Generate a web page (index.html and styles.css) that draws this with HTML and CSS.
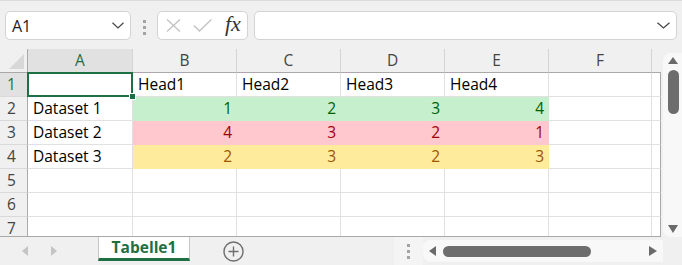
FILE: index.html
```html
<!DOCTYPE html>
<html lang="de">
<head>
  <meta charset="UTF-8">
  <title>Tabelle1</title>
  <link rel="stylesheet" href="styles.css">
</head>
<body>

  <!-- Formula bar -->
  <div class="toolbar">
    <div class="name-box">
      <span>A1</span>
      <svg width="12" height="7" viewBox="0 0 12 7"><path d="M0.5 0.8 L6 6 L11.5 0.8" fill="none" stroke="#444" stroke-width="1.2"/></svg>
    </div>
    <div class="grip"><i></i><i></i><i></i></div>
    <div class="fx-box">
      <svg width="15" height="13" viewBox="0 0 15 13"><path d="M1 0.5 L14 12.5 M14 0.5 L1 12.5" stroke="#c2c2c2" stroke-width="1.3"/></svg>
      <svg width="19" height="13" viewBox="0 0 19 13"><path d="M0.8 6.5 L6.5 12 L18.3 0.5" fill="none" stroke="#c2c2c2" stroke-width="1.3"/></svg>
      <span class="fx">fx</span>
    </div>
    <div class="formula">
      <svg width="13" height="7" viewBox="0 0 13 7"><path d="M0.5 0.8 L6.5 6 L12.5 0.8" fill="none" stroke="#444" stroke-width="1.2"/></svg>
    </div>
  </div>

  <!-- Sheet -->
  <div class="sheet">
    <div class="grid">
      <div class="corner"></div>
      <div class="ch sel">A</div>
      <div class="ch">B</div>
      <div class="ch">C</div>
      <div class="ch">D</div>
      <div class="ch">E</div>
      <div class="ch">F</div>
      <div class="ch last"></div>

      <div class="rh sel">1</div>
      <div class="c active"></div>
      <div class="c">Head1</div>
      <div class="c">Head2</div>
      <div class="c">Head3</div>
      <div class="c">Head4</div>
      <div class="c"></div>
      <div class="c edge"></div>

      <div class="rh">2</div>
      <div class="c">Dataset 1</div>
      <div class="c num g">1</div>
      <div class="c num g">2</div>
      <div class="c num g">3</div>
      <div class="c num g">4</div>
      <div class="c"></div>
      <div class="c edge"></div>

      <div class="rh">3</div>
      <div class="c">Dataset 2</div>
      <div class="c num r">4</div>
      <div class="c num r">3</div>
      <div class="c num r">2</div>
      <div class="c num r">1</div>
      <div class="c"></div>
      <div class="c edge"></div>

      <div class="rh">4</div>
      <div class="c">Dataset 3</div>
      <div class="c num y">2</div>
      <div class="c num y">3</div>
      <div class="c num y">2</div>
      <div class="c num y">3</div>
      <div class="c"></div>
      <div class="c edge"></div>

      <div class="rh">5</div>
      <div class="c"></div><div class="c"></div><div class="c"></div><div class="c"></div>
      <div class="c"></div><div class="c"></div><div class="c edge"></div>

      <div class="rh">6</div>
      <div class="c"></div><div class="c"></div><div class="c"></div><div class="c"></div>
      <div class="c"></div><div class="c"></div><div class="c edge"></div>

      <div class="rh">7</div>
      <div class="c"></div><div class="c"></div><div class="c"></div><div class="c"></div>
      <div class="c"></div><div class="c"></div><div class="c edge"></div>
    </div>

    <div class="vscroll">
      <span class="arrow up"></span>
      <span class="thumb-v"></span>
      <span class="arrow down"></span>
    </div>
  </div>

  <!-- Sheet tabs -->
  <div class="tabbar">
    <div class="nav">
      <span class="arrow left"></span>
      <span class="arrow right"></span>
    </div>
    <div class="tab">Tabelle1</div>
    <div class="add">
      <svg width="21" height="21" viewBox="0 0 21 21">
        <circle cx="10.5" cy="10.5" r="9.5" fill="none" stroke="#6f6f6f" stroke-width="1.4"/>
        <path d="M10.5 5.5 V15.5 M5.5 10.5 H15.5" stroke="#6f6f6f" stroke-width="1.4"/>
      </svg>
    </div>
    <div class="grip h"><i></i><i></i><i></i></div>
    <div class="hscroll">
      <span class="arrow left dark"></span>
      <span class="thumb-h"></span>
      <span class="arrow right dark"></span>
    </div>
  </div>

</body>
</html>
```

FILE: styles.css
```css
/* Global Styles */
body {
  margin: 0;
  width: 682px;
  height: 265px;
  overflow: hidden;
  background: #f0f0f0;
  font-family: "Open Sans", "Noto Sans", sans-serif;
  color: #000;
}

/* Formula bar */
.toolbar {
  height: 49px;
  box-sizing: border-box;
  border-top: 1px solid #dcdcdc;
  padding: 10px 5px 0;
  display: flex;
  align-items: flex-start;
}

.name-box,
.fx-box,
.formula {
  height: 29px;
  box-sizing: border-box;
  background: #fff;
  border: 1px solid #d3d3d3;
  border-radius: 5px;
  display: flex;
  align-items: center;
}

.name-box {
  width: 126px;
  justify-content: space-between;
  padding: 0 6px 0 6px;
  font-size: 16px;
  color: #222;
}

.grip {
  width: 26px;
  display: flex;
  flex-direction: column;
  align-items: center;
  gap: 3px;
  padding-top: 9px;
}

.grip i {
  width: 3px;
  height: 3px;
  background: #a3a3a3;
}

.fx-box {
  width: 91px;
  padding: 0 6px 0 8px;
  gap: 12px;
}

.fx {
  font-family: "Liberation Serif", serif;
  font-style: italic;
  font-size: 22px;
  color: #333;
  margin-left: 1px;
  margin-top: -3px;
}

.formula {
  flex: 1;
  margin-left: 6px;
  justify-content: flex-end;
  padding-right: 6px;
}

/* Sheet grid */
.sheet {
  display: flex;
  height: 188px;
}

.grid {
  width: 661px;
  height: 188px;
  box-sizing: border-box;
  border-bottom: 1px solid #a9a9a9;
  overflow: hidden;
  display: grid;
  grid-template-columns: 28px 105px 104px 104px 104px 104px 103px 9px;
  grid-auto-rows: 24px;
  font-size: 15.5px;
}

.grid > div {
  box-sizing: border-box;
  line-height: 23px;
  white-space: nowrap;
}

.corner {
  position: relative;
  border-right: 1px solid #a9a9a9;
  border-bottom: 1px solid #a9a9a9;
}

.corner::after {
  content: "";
  position: absolute;
  right: 3px;
  bottom: 3px;
  width: 15px;
  height: 15px;
  background: #d8d8d8;
  clip-path: polygon(100% 0, 100% 100%, 0 100%);
}

.ch {
  text-align: center;
  color: #444;
  border-right: 1px solid #d4d4d4;
  border-bottom: 1px solid #a9a9a9;
}

.ch.last {
  border-right: none;
}

.ch.sel {
  background: #e1e1e1;
  color: #1e6f44;
}

.rh {
  text-align: center;
  padding-right: 4px;
  color: #444;
  background: #f0f0f0;
  border-right: 1px solid #a9a9a9;
  border-bottom: 1px solid #d9d9d9;
}

.rh.sel {
  background: #e1e1e1;
  color: #1e6f44;
}

.c {
  background: #fff;
  padding: 0 4px 0 5px;
  border-right: 1px solid #e1e1e1;
  border-bottom: 1px solid #e1e1e1;
  overflow: visible;
}

.c.num {
  text-align: right;
}

.c.edge {
  padding: 0;
  border-right: 1px solid #a9a9a9;
}

.c.g {
  background: #c6efce;
  border-color: #c6efce;
  color: #006100;
}

.c.r {
  background: #ffc7ce;
  border-color: #ffc7ce;
  color: #9c0006;
}

.c.y {
  background: #ffeb9c;
  border-color: #ffeb9c;
  color: #9c5700;
}

/* Active cell frame */
.c.active {
  position: relative;
}

.c.active::before {
  content: "";
  position: absolute;
  left: -1px;
  top: -1px;
  right: -1px;
  bottom: -1px;
  border: 2px solid #1e6f44;
}

.c.active::after {
  content: "";
  position: absolute;
  right: -4px;
  bottom: -4px;
  width: 5px;
  height: 5px;
  background: #1e6f44;
  border: 1px solid #fff;
  z-index: 2;
}

/* Scrollbars */
.arrow {
  width: 0;
  height: 0;
  border-style: solid;
  border-color: transparent;
}

.arrow.up {
  border-width: 0 5px 7px;
  border-bottom-color: #6a6a6a;
}

.arrow.down {
  border-width: 8px 5px 0;
  border-top-color: #6a6a6a;
  margin-top: auto;
}

.arrow.left {
  border-width: 5px 6px 5px 0;
  border-right-color: #c4c4c4;
}

.arrow.right {
  border-width: 5px 0 5px 6px;
  border-left-color: #c4c4c4;
}

.arrow.left.dark {
  border-width: 5px 7px 5px 0;
  border-right-color: #6a6a6a;
}

.arrow.right.dark {
  border-width: 5px 0 5px 8px;
  border-left-color: #6a6a6a;
  margin-left: auto;
}

.vscroll {
  flex: 1;
  margin: 4px 0 0 2px;
  padding: 4px 0 4px;
  background: #f8f8f8;
  border-radius: 8px 0 0 8px;
  display: flex;
  flex-direction: column;
  align-items: center;
}

.thumb-v {
  width: 11px;
  height: 44px;
  margin-top: 6px;
  margin-left: 2px;
  border-radius: 6px;
  background: #6d6d6d;
}

/* Sheet tabs */
.tabbar {
  height: 28px;
  display: flex;
  align-items: flex-start;
}

.nav {
  width: 98px;
  display: flex;
  gap: 23px;
  padding: 9px 0 0 22px;
  box-sizing: border-box;
}

.tab {
  width: 92px;
  height: 24px;
  box-sizing: border-box;
  background: #fff;
  border-left: 1px solid #c6c6c6;
  border-right: 1px solid #c6c6c6;
  border-bottom: 3px solid #1e6f44;
  text-align: center;
  font-weight: bold;
  font-size: 15.5px;
  line-height: 20px;
  color: #1e6f44;
}

.add {
  width: 204px;
  padding: 4px 0 0 33px;
  box-sizing: border-box;
}

.grip.h {
  width: 29px;
  height: 28px;
  box-sizing: border-box;
  padding-top: 7px;
  background: #f4f4f4;
}

.hscroll {
  width: 240px;
  height: 22px;
  margin-top: 3px;
  box-sizing: border-box;
  padding: 0 6px 0 6px;
  background: #f8f8f8;
  border-radius: 8px 0 0 8px;
  display: flex;
  align-items: center;
}

.thumb-h {
  width: 148px;
  height: 11px;
  margin-left: 7px;
  border-radius: 6px;
  background: #6d6d6d;
}
```
